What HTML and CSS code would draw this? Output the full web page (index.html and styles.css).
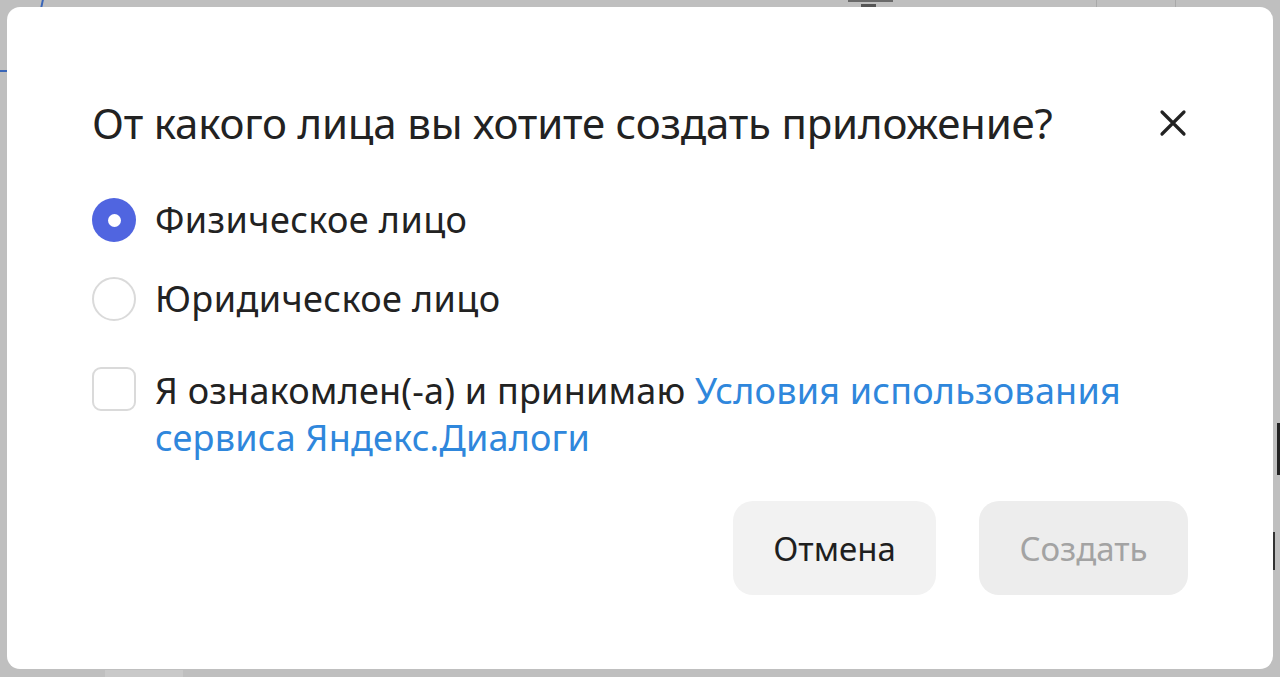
FILE: index.html
```html
<!DOCTYPE html>
<html lang="ru">
<head>
<meta charset="utf-8">
<title>Создание приложения</title>
<link rel="stylesheet" href="styles.css">
</head>
<body>
<div class="backdrop">
  <span class="bg-mark bg-blue-v"></span>
  <span class="bg-mark bg-blue-h"></span>
  <span class="bg-mark bg-bar1"></span>
  <span class="bg-mark bg-bar2"></span>
  <span class="bg-mark bg-line1"></span>
  <span class="bg-mark bg-line2"></span>
  <span class="bg-mark bg-right1"></span>
  <span class="bg-mark bg-right2"></span>
  <span class="bg-mark bg-bottom"></span>
</div>
<div class="overlay">
  <div class="modal" role="dialog">
    <div class="modal-header">
      <h1 class="modal-title">От какого лица вы хотите создать приложение?</h1>
      <button class="close" aria-label="Закрыть">
        <svg width="28" height="28" viewBox="0 0 28 28"><path d="M3 3 L25 25 M25 3 L3 25" stroke="#222" stroke-width="3.2" stroke-linecap="round" fill="none"/></svg>
      </button>
    </div>
    <div class="radios">
      <label class="radio-row">
        <span class="radio radio-checked"></span>
        <span class="radio-text">Физическое лицо</span>
      </label>
      <label class="radio-row">
        <span class="radio"></span>
        <span class="radio-text">Юридическое лицо</span>
      </label>
    </div>
    <label class="agree">
      <span class="checkbox"></span>
      <span class="agree-text">Я ознакомлен(-а) и принимаю <a class="link" href="#">Условия использования сервиса Яндекс.Диалоги</a></span>
    </label>
    <div class="actions">
      <button class="btn btn-cancel">Отмена</button>
      <button class="btn btn-create" disabled>Создать</button>
    </div>
  </div>
</div>
</body>
</html>
```
FILE: styles.css
```css
html, body {
  margin: 0;
  padding: 0;
}
body {
  width: 1280px;
  height: 677px;
  overflow: hidden;
  background: #bfbfbf;
  font-family: "Noto Sans", "Open Sans", sans-serif;
  color: #222;
  position: relative;
}
.backdrop {
  position: absolute;
  inset: 0;
}
.bg-mark {
  position: absolute;
  display: block;
}
.bg-blue-v { left: 41px; top: 0; width: 2px; height: 8px; background: #3a66b8; transform: skewX(-12deg); }
.bg-blue-h { left: 0; top: 70px; width: 7px; height: 2px; background: #3a66b8; }
.bg-bar1 { left: 848px; top: 0; width: 45px; height: 2px; background: #6a6a6a; }
.bg-bar2 { left: 861px; top: 4px; width: 15px; height: 3px; background: #555; }
.bg-line1 { left: 1096px; top: 0; width: 1px; height: 7px; background: #a9a9a9; }
.bg-line2 { left: 1175px; top: 0; width: 1px; height: 7px; background: #a9a9a9; }
.bg-right1 { left: 1277px; top: 423px; width: 3px; height: 52px; background: #222; }
.bg-right2 { left: 1273px; top: 532px; width: 2px; height: 38px; background: #333; }
.bg-bottom { left: 105px; top: 670px; width: 78px; height: 7px; background: #c9c9c9; }

.overlay {
  position: relative;
  padding: 7px;
}
.modal {
  box-sizing: border-box;
  width: 1266px;
  height: 662px;
  background: #fff;
  border-radius: 13px;
  padding: 92px 85px 0 85px;
  display: flex;
  flex-direction: column;
}
.modal-header {
  display: flex;
  align-items: center;
  justify-content: space-between;
  height: 48px;
}
.modal-title {
  margin: 0;
  font-size: 42px;
  font-weight: 400;
  line-height: 48px;
  letter-spacing: -0.2px;
  color: #222;
}
.close {
  border: 0;
  background: none;
  padding: 0;
  width: 28px;
  height: 28px;
  margin-right: 1px;
  display: flex;
}
.radios {
  margin-top: 51px;
  display: flex;
  flex-direction: column;
  gap: 35px;
}
.radio-row {
  display: flex;
  align-items: center;
  height: 44px;
  gap: 19px;
}
.radio {
  box-sizing: border-box;
  width: 44px;
  height: 44px;
  border-radius: 50%;
  border: 2px solid #dadada;
  background: #fff;
  flex: none;
  display: flex;
  align-items: center;
  justify-content: center;
}
.radio-checked {
  border: 0;
  background: #5065e0;
}
.radio-checked::after {
  content: "";
  width: 13px;
  height: 13px;
  border-radius: 50%;
  background: #fff;
}
.radio-text {
  font-size: 36px;
  line-height: 44px;
  letter-spacing: 0.4px;
  color: #222;
}
.agree {
  margin-top: 46px;
  display: flex;
  align-items: flex-start;
  gap: 19px;
}
.checkbox {
  box-sizing: border-box;
  width: 44px;
  height: 44px;
  flex: none;
  border: 2px solid #dadada;
  border-radius: 9px;
  background: #fff;
}
.agree-text {
  font-size: 36px;
  line-height: 47px;
  letter-spacing: 0.2px;
  color: #222;
  max-width: 985px;
}
.link {
  color: #2f87dc;
  text-decoration: none;
}
.actions {
  margin-top: 40px;
  display: flex;
  justify-content: flex-end;
  gap: 43px;
}
.btn {
  height: 94px;
  border: 0;
  border-radius: 20px;
  font-family: "Noto Sans", "Open Sans", sans-serif;
  font-size: 33px;
  letter-spacing: 0;
  padding: 0;
}
.btn-cancel {
  width: 203px;
  background: #f2f2f2;
  color: #1f1f1f;
}
.btn-create {
  width: 209px;
  background: #ededed;
  color: #a3a3a3;
}
```
